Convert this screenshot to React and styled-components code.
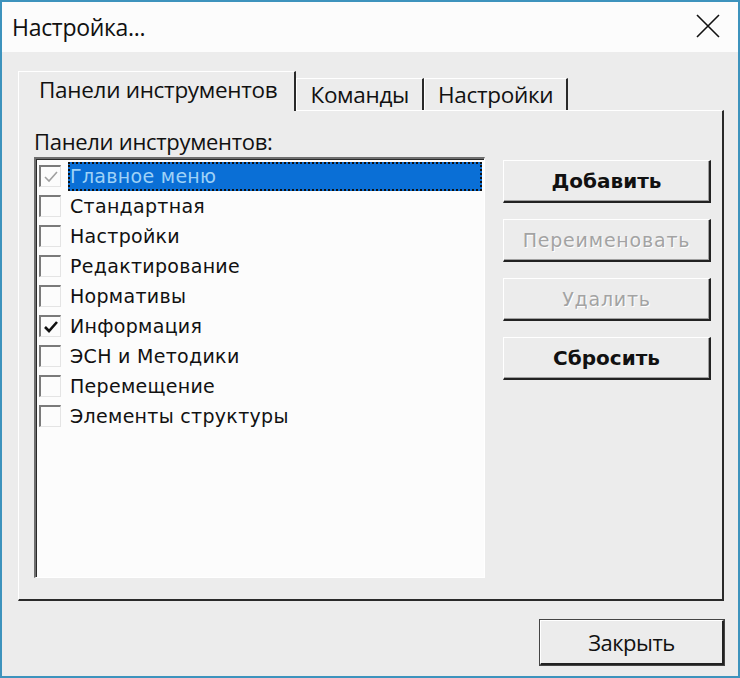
import React from 'react'
import styled, { createGlobalStyle } from 'styled-components'

const items = [
  { name: 'Главное меню', checked: true, disabled: true, selected: true },
  { name: 'Стандартная' },
  { name: 'Настройки' },
  { name: 'Редактирование' },
  { name: 'Нормативы' },
  { name: 'Информация', checked: true },
  { name: 'ЭСН и Методики' },
  { name: 'Перемещение' },
  { name: 'Элементы структуры' },
]

const buttons = [
  { label: 'Добавить' },
  { label: 'Переименовать', disabled: true },
  { label: 'Удалить', disabled: true },
  { label: 'Сбросить' },
]

const App = () => {
  return (
    <>
      <GlobalStyle />
      <Window>
        <TitleBar>
          <Title>Настройка...</Title>
          <Close>
            <svg width="24" height="24" viewBox="0 0 24 24">
              <path d="M1 1 L23 23 M23 1 L1 23" stroke="#111" strokeWidth="1.6" fill="none" />
            </svg>
          </Close>
        </TitleBar>
        <Body>
          <Tabs>
            <Tab active>Панели инструментов</Tab>
            <Tab>Команды</Tab>
            <Tab>Настройки</Tab>
          </Tabs>
          <Sheet>
            <LeftCol>
              <Label>Панели инструментов:</Label>
              <List>
                {items.map((it) => (
                  <Row key={it.name}>
                    <Check disabled={it.disabled}>
                      {it.checked && (
                        <svg width="16" height="14" viewBox="0 0 16 14">
                          <path
                            d="M2 7 L6 11 L14 2"
                            stroke={it.disabled ? '#a0a0a0' : '#111'}
                            strokeWidth={it.disabled ? 1.6 : 2.6}
                            fill="none"
                          />
                        </svg>
                      )}
                    </Check>
                    <ItemText selected={it.selected}>{it.name}</ItemText>
                  </Row>
                ))}
              </List>
            </LeftCol>
            <ButtonCol>
              {buttons.map((b) => (
                <Button key={b.label} disabled={b.disabled}>
                  {b.label}
                </Button>
              ))}
            </ButtonCol>
          </Sheet>
          <Footer>
            <CloseButton>Закрыть</CloseButton>
          </Footer>
        </Body>
      </Window>
    </>
  )
}

export default App

const GlobalStyle = createGlobalStyle`
  body {
    margin: 0;
    background: #ffffff;
    font-family: "DejaVu Sans", "Noto Sans", sans-serif;
  }
`

const Window = styled.div`
  width: 740px;
  height: 678px;
  box-sizing: border-box;
  border: 2px solid #3d93bd;
  box-shadow: inset 0 0 0 1px #bfe6f4;
  display: flex;
  flex-direction: column;
  overflow: hidden;
  background: #ececec;
`

const TitleBar = styled.div`
  height: 50px;
  flex: none;
  background: #fcfcfc;
  display: flex;
  align-items: center;
  justify-content: space-between;
  padding: 0 18px 0 10px;
`

const Title = styled.div`
  font-family: "Open Sans", "Noto Sans", sans-serif;
  font-size: 23px;
  color: #111;
  letter-spacing: -0.3px;
`

const Close = styled.div`
  display: flex;
  align-items: center;
  margin-top: -2px;
`

const Body = styled.div`
  flex: 1;
  display: flex;
  flex-direction: column;
  padding: 19px 14px 0 16px;
  background: #ececec;
`

const Tabs = styled.div`
  display: flex;
  align-items: flex-end;
  height: 39px;
  position: relative;
  z-index: 1;
`

const Tab = styled.div`
  box-sizing: border-box;
  height: ${(p) => (p.active ? '40px' : '32px')};
  margin-bottom: ${(p) => (p.active ? '-1px' : '0')};
  padding: ${(p) => (p.active ? '0 17px 4px 20px' : '0 13px 0 13px')};
  display: flex;
  align-items: center;
  background: #ececec;
  border-top: 1px solid #ffffff;
  border-left: 1px solid #ffffff;
  border-right: 2px solid #2a2a2a;
  font-family: "Open Sans", "Noto Sans", sans-serif;
  font-size: 22.5px;
  letter-spacing: -0.3px;
  color: #111;
`

const Sheet = styled.div`
  box-sizing: border-box;
  height: 491px;
  display: flex;
  gap: 18px;
  padding: 18px 13px 18px 15px;
  border-top: 1px solid #ffffff;
  border-left: 1px solid #ffffff;
  border-right: 2px solid #2a2a2a;
  border-bottom: 2px solid #2a2a2a;
`

const LeftCol = styled.div`
  display: flex;
  flex-direction: column;
`

const Label = styled.div`
  font-family: "Open Sans", "Noto Sans", sans-serif;
  font-size: 22px;
  letter-spacing: -0.3px;
  color: #111;
  height: 28px;
  line-height: 24px;
`

const List = styled.div`
  box-sizing: border-box;
  width: 451px;
  height: 421px;
  background: #fcfcfc;
  border-top: 2px solid #6e6e6e;
  border-left: 2px solid #6e6e6e;
  border-right: 1px solid #ffffff;
  border-bottom: 1px solid #ffffff;
  box-shadow: inset 1px 1px 0 #2a2a2a;
  padding: 2px 2px 0 3px;
`

const Row = styled.div`
  height: 30px;
  display: flex;
  align-items: center;
`

const Check = styled.div`
  box-sizing: border-box;
  width: 22px;
  height: 22px;
  flex: none;
  background: #fcfcfc;
  border-top: 2px solid #7a7a7a;
  border-left: 2px solid #7a7a7a;
  border-right: 1px solid #e4e4e4;
  border-bottom: 1px solid #e4e4e4;
  display: flex;
  align-items: center;
  justify-content: center;
  margin-right: 7px;
`

const ItemText = styled.div`
  flex: 1;
  height: 29px;
  display: flex;
  align-items: center;
  padding-left: 2px;
  font-family: "DejaVu Sans", sans-serif;
  font-size: 19px;
  letter-spacing: 0.3px;
  color: ${(p) => (p.selected ? '#9fd2f7' : '#111')};
  background: ${(p) => (p.selected ? '#0a6fd6' : 'transparent')};
  outline: ${(p) => (p.selected ? '2px dotted #111' : 'none')};
  outline-offset: -2px;
`

const ButtonCol = styled.div`
  display: flex;
  flex-direction: column;
  gap: 16px;
  padding-top: 31px;
`

const Button = styled.div`
  box-sizing: border-box;
  width: 208px;
  height: 43px;
  display: flex;
  align-items: center;
  justify-content: center;
  background: #ececec;
  border-top: 1px solid #ffffff;
  border-left: 1px solid #ffffff;
  border-right: 2px solid #222;
  border-bottom: 2px solid #222;
  box-shadow: inset -1px -1px 0 #a0a0a0;
  font-family: "DejaVu Sans", sans-serif;
  font-size: ${(p) => (p.disabled ? '19px' : '20px')};
  font-weight: ${(p) => (p.disabled ? 400 : 700)};
  letter-spacing: ${(p) => (p.disabled ? '0.8px' : '0')};
  color: ${(p) => (p.disabled ? '#a3a3a3' : '#111')};
  text-shadow: ${(p) => (p.disabled ? '1px 1px 0 #ffffff' : 'none')};
`

const Footer = styled.div`
  display: flex;
  justify-content: flex-end;
  padding-top: 19px;
`

const CloseButton = styled(Button)`
  width: 184px;
  height: 45px;
  font-weight: 400;
  font-family: "Open Sans", "Noto Sans", sans-serif;
  font-size: 22px;
  letter-spacing: -0.5px;
  border-top: 1px solid #ffffff;
  border-left: 1px solid #ffffff;
  box-shadow: inset 0 0 0 1px #ececec, inset -1px -1px 0 #a0a0a0, 0 0 0 1px #444;
`
